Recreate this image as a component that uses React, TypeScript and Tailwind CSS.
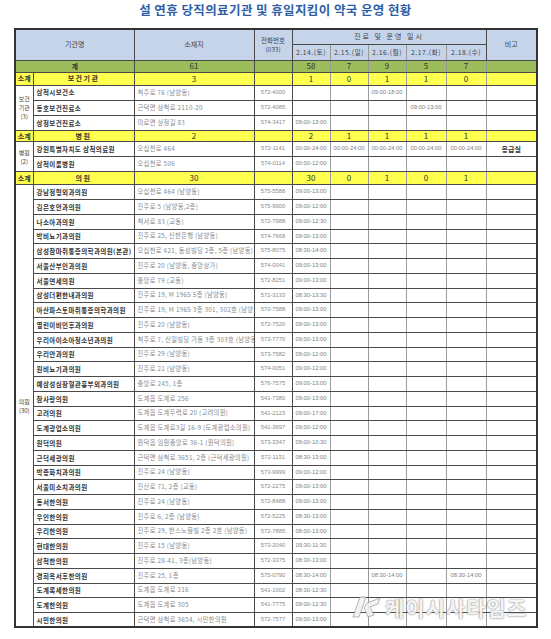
import React from "react";

type Row = {
  name: string;
  addr: string;
  phone: string;
  times: string[];
  note?: string;
};

const health: Row[] = [
  { name: "삼척시보건소", addr: "척주로 76 (남양동)", phone: "572-4000", times: ["", "", "09:00-18:00", "", ""] },
  { name: "동호보건진료소", addr: "근덕면 삼척로 2110-20", phone: "572-4085", times: ["", "", "", "09:00-13:00", ""] },
  { name: "상정보건진료소", addr: "미로면 상정길 83", phone: "574-3417", times: ["09:00-13:00", "", "", "", ""] },
];

const hospitals: Row[] = [
  {
    name: "강원특별자치도 삼척의료원",
    addr: "오십천로 464",
    phone: "572-1141",
    times: ["00:00-24:00", "00:00-24:00", "00:00-24:00", "00:00-24:00", "00:00-24:00"],
    note: "응급실",
  },
  { name: "삼척이룸병원", addr: "오십천로 506", phone: "574-0114", times: ["00:00-12:00", "", "", "", ""] },
];

const m = (t: string) => [t, "", "", "", ""];

const clinics: Row[] = [
  { name: "강남정형외과의원", addr: "오십천로 464 (남양동)", phone: "575-5588", times: m("09:00-13:00") },
  { name: "김은호안과의원", addr: "진주로 5 (남양동,2층)", phone: "575-9900", times: m("09:00-12:00") },
  { name: "나소아과의원", addr: "척서로 83 (교동)", phone: "572-7988", times: m("09:00-12:30") },
  { name: "박비뇨기과의원", addr: "진주로 25, 신한은행 (남양동)", phone: "574-7668", times: m("09:00-13:00") },
  { name: "삼성참마취통증의학과의원(본관)", addr: "오십천로 421, 동성빌딩 2층, 5층 (남양동)", phone: "575-8075", times: m("08:30-14:00") },
  { name: "서울산부인과의원", addr: "진주로 20 (남양동, 중앙상가)", phone: "574-0041", times: m("09:00-13:00") },
  { name: "서울연세의원", addr: "중앙로 79 (교동)", phone: "572-8251", times: m("09:00-13:00") },
  { name: "삼성더편한내과의원", addr: "진주로 19, M 1965 5층 (남양동)", phone: "572-3133", times: m("08:30-13:30") },
  { name: "아산파스토마취통증의학과의원", addr: "진주로 19, M 1965 3층 301, 302호 (남양동)", phone: "570-7588", times: m("09:00-13:00") },
  { name: "열린이비인후과의원", addr: "진주로 20 (남양동)", phone: "572-7520", times: m("09:00-13:00") },
  { name: "우리아이소아청소년과의원", addr: "척주로 7, 신일빌딩 가동 3층 303호 (남양동)", phone: "573-7770", times: m("09:00-13:00") },
  { name: "우리안과의원", addr: "진주로 29 (남양동)", phone: "573-7582", times: m("09:00-12:00") },
  { name: "원비뇨기과의원", addr: "진주로 21 (남양동)", phone: "574-0051", times: m("09:00-12:00") },
  { name: "예삼성심장혈관흉부외과의원", addr: "중앙로 245, 1층", phone: "576-7575", times: m("09:00-13:00") },
  { name: "참사랑의원", addr: "도계읍 도계로 256", phone: "541-7380", times: m("09:00-13:00") },
  { name: "고려의원", addr: "도계읍 도계두력로 20 (고려의원)", phone: "541-2123", times: m("09:00-17:00") },
  { name: "도계광업소의원", addr: "도계읍 도계로3길 16-9 (도계광업소의원)", phone: "541-3697", times: m("09:00-12:00") },
  { name: "원덕의원", addr: "원덕읍 임원중앙로 36-1 (원덕의원)", phone: "573-3347", times: m("09:00-10:30") },
  { name: "근덕세광의원", addr: "근덕면 삼척로 3651, 2층 (근덕세광의원)", phone: "572-1131", times: m("08:30-13:00") },
  { name: "박종화치과의원", addr: "진주로 24 (남양동)", phone: "573-9999", times: m("09:00-12:00") },
  { name: "서울미소치과의원", addr: "진산로 71, 2층 (교동)", phone: "572-2275", times: m("09:00-13:00") },
  { name: "동서한의원", addr: "진주로 24 (남양동)", phone: "572-8488", times: m("09:00-13:00") },
  { name: "우인한의원", addr: "진주로 6, 2층 (남양동)", phone: "572-5225", times: m("08:30-13:00") },
  { name: "우리한의원", addr: "진주로 29, 한스노블빌 2층 2호 (남양동)", phone: "572-7885", times: m("08:00-13:00") },
  { name: "현대한의원", addr: "진주로 15 (남양동)", phone: "573-2040", times: m("09:30-11:30") },
  { name: "삼척한의원", addr: "진주로 28-41, 3층(남양동)", phone: "572-3375", times: m("08:30-13:00") },
  { name: "경희옥서후한의원", addr: "진주로 25, 1층", phone: "575-0790", times: ["08:30-14:00", "", "08:30-14:00", "", "08:30-14:00"] },
  { name: "도계록세한의원", addr: "도계읍 도계로 216", phone: "541-1002", times: m("08:30-12:30") },
  { name: "도계한의원", addr: "도계읍 도계로 305", phone: "541-7775", times: m("09:00-12:30") },
  { name: "시민한의원", addr: "근덕면 삼척로 3654, 시민한의원", phone: "572-7577", times: m("09:00-13:00") },
];

const border = "border border-[#4a4a4a] p-0";
const cell = `${border} overflow-hidden whitespace-nowrap leading-none`;
const dateCell = "border border-x-[#9a9a9a] border-y-[#4a4a4a] p-0 overflow-hidden whitespace-nowrap leading-none";

function Subtotal({ label, total, days, h }: { label: string; total: string; days: string[]; h: string }) {
  return (
    <tr className={`${h} bg-[#ffff4f] text-[#333] font-bold`}>
      <td className={`${cell} text-[7px] text-center`}>소계</td>
      <td className={`${cell} text-[7px] text-center tracking-[1.5px]`}>{label}</td>
      <td className={`${cell} text-[8px] text-center font-normal`}>{total}</td>
      <td className={cell}></td>
      {days.map((d, i) => (
        <td key={i} className={`${dateCell} text-[8px] text-center font-normal`}>
          {d}
        </td>
      ))}
      <td className={cell}></td>
    </tr>
  );
}

function DataRows({ rows, group, h }: { rows: Row[]; group: string[]; h: string }) {
  return (
    <>
      {rows.map((r, i) => (
        <tr key={r.name} className={`${h} bg-white`}>
          {i === 0 && (
            <td rowSpan={rows.length} className={`${border} text-center text-[#444]`}>
              <div className="flex flex-col items-center">
                {group.map((g) => (
                  <span key={g} className="block text-[6px] leading-[9px]">
                    {g}
                  </span>
                ))}
              </div>
            </td>
          )}
          <td className={`${cell} text-[6.5px] font-bold text-[#333] pl-[3px] tracking-[0.4px]`}>{r.name}</td>
          <td className={`${cell} text-[6.3px] text-[#8a8a8a] pl-[3px] tracking-[0.3px]`}>{r.addr}</td>
          <td className={`${cell} text-[5.8px] text-[#8a8a8a] text-center font-['Liberation_Sans',sans-serif]`}>{r.phone}</td>
          {r.times.map((t, j) => (
            <td key={j} className={`${dateCell} text-[5.8px] text-[#808080] text-center font-['Liberation_Sans',sans-serif]`}>
              {t}
            </td>
          ))}
          <td className={`${cell} text-[7px] font-bold text-[#333] text-center`}>{r.note}</td>
        </tr>
      ))}
    </>
  );
}

export default function App() {
  return (
    <div className="relative w-[551px] h-[639px] bg-white font-['Noto_Sans_CJK_KR',sans-serif] overflow-hidden">
      {/* Title */}
      <h1 className="h-[28px] pt-[4px] text-center text-[12.5px] font-bold text-[#2f5ea6] tracking-[0.4px] leading-none">
        설 연휴 당직의료기관 및 휴일지킴이 약국 운영 현황
      </h1>

      <table className="ml-[14px] w-[522px] table-fixed border-collapse border-2 border-[#333]">
        <colgroup>
          <col className="w-[18px]" />
          <col className="w-[101px]" />
          <col className="w-[120px]" />
          <col className="w-[38px]" />
          <col className="w-[38px]" />
          <col className="w-[38px]" />
          <col className="w-[38px]" />
          <col className="w-[40px]" />
          <col className="w-[40px]" />
          <col className="w-[51px]" />
        </colgroup>
        <thead>
          <tr className="h-[15px] bg-[#c6d4ea] text-[#444]">
            <th rowSpan={2} colSpan={2} className={`${cell} text-[7px] font-normal`}>
              기관명
            </th>
            <th rowSpan={2} className={`${cell} text-[7px] font-normal`}>
              소재지
            </th>
            <th rowSpan={2} className={`${border} font-normal`}>
              <span className="block text-[6.5px] leading-[9px]">전화번호</span>
              <span className="block text-[6.5px] leading-[9px]">(033)</span>
            </th>
            <th colSpan={5} className={`${cell} text-[7px] font-normal tracking-[2px]`}>
              진료 및 운영 일시
            </th>
            <th rowSpan={2} className={`${cell} text-[7px] font-normal`}>
              비고
            </th>
          </tr>
          <tr className="h-[16px] bg-[#c6d4ea] text-[#444]">
            {["2.14.(토)", "2.15.(일)", "2.16.(월)", "2.17.(화)", "2.18.(수)"].map((d) => (
              <th key={d} className={`${dateCell} text-[6.8px] font-normal tracking-[0.5px]`}>
                {d}
              </th>
            ))}
          </tr>
        </thead>
        <tbody>
          <tr className="h-[12px] bg-[#9dbc5b] text-[#333]">
            <td colSpan={2} className={`${cell} text-[7px] font-bold text-center`}>
              계
            </td>
            <td className={`${cell} text-[8px] text-center`}>61</td>
            <td className={cell}></td>
            {["58", "7", "9", "5", "7"].map((d, i) => (
              <td key={i} className={`${dateCell} text-[8px] text-center`}>
                {d}
              </td>
            ))}
            <td className={cell}></td>
          </tr>

          <Subtotal label="보건기관" total="3" days={["1", "0", "1", "1", "0"]} h="h-[13px]" />
          <DataRows rows={health} h="h-[15.3px]" group={["보건", "기관", "(3)"]} />

          <Subtotal label="병원" total="2" days={["2", "1", "1", "1", "1"]} h="h-[11px]" />
          <DataRows rows={hospitals} h="h-[15px]" group={["병원", "(2)"]} />

          <Subtotal label="의원" total="30" days={["30", "0", "1", "0", "1"]} h="h-[13px]" />
          <DataRows rows={clinics} h="h-[14.75px]" group={["의원", "(30)"]} />
        </tbody>
      </table>

      {/* Watermark */}
      <div className="absolute left-[352px] top-[595px] flex items-center gap-[3px] opacity-90">
        <svg width="30" height="24" viewBox="0 0 30 24">
          <path d="M8 2 L14 2 L7 22 L1 22 Z" fill="#f2f2f2" stroke="#9a9a9a" strokeWidth="0.8" />
          <path d="M15 8 L28 3 L26 9 L18 12 L22 20 L16 22 L12 13 Z" fill="#f2f2f2" stroke="#9a9a9a" strokeWidth="0.8" />
        </svg>
        <span className="text-[21px] font-bold text-[#f4f4f4] tracking-[1px] leading-none [text-shadow:0_0_1px_#777,0_0_2px_#999]">
          케이시사타임즈
        </span>
      </div>
    </div>
  );
}
